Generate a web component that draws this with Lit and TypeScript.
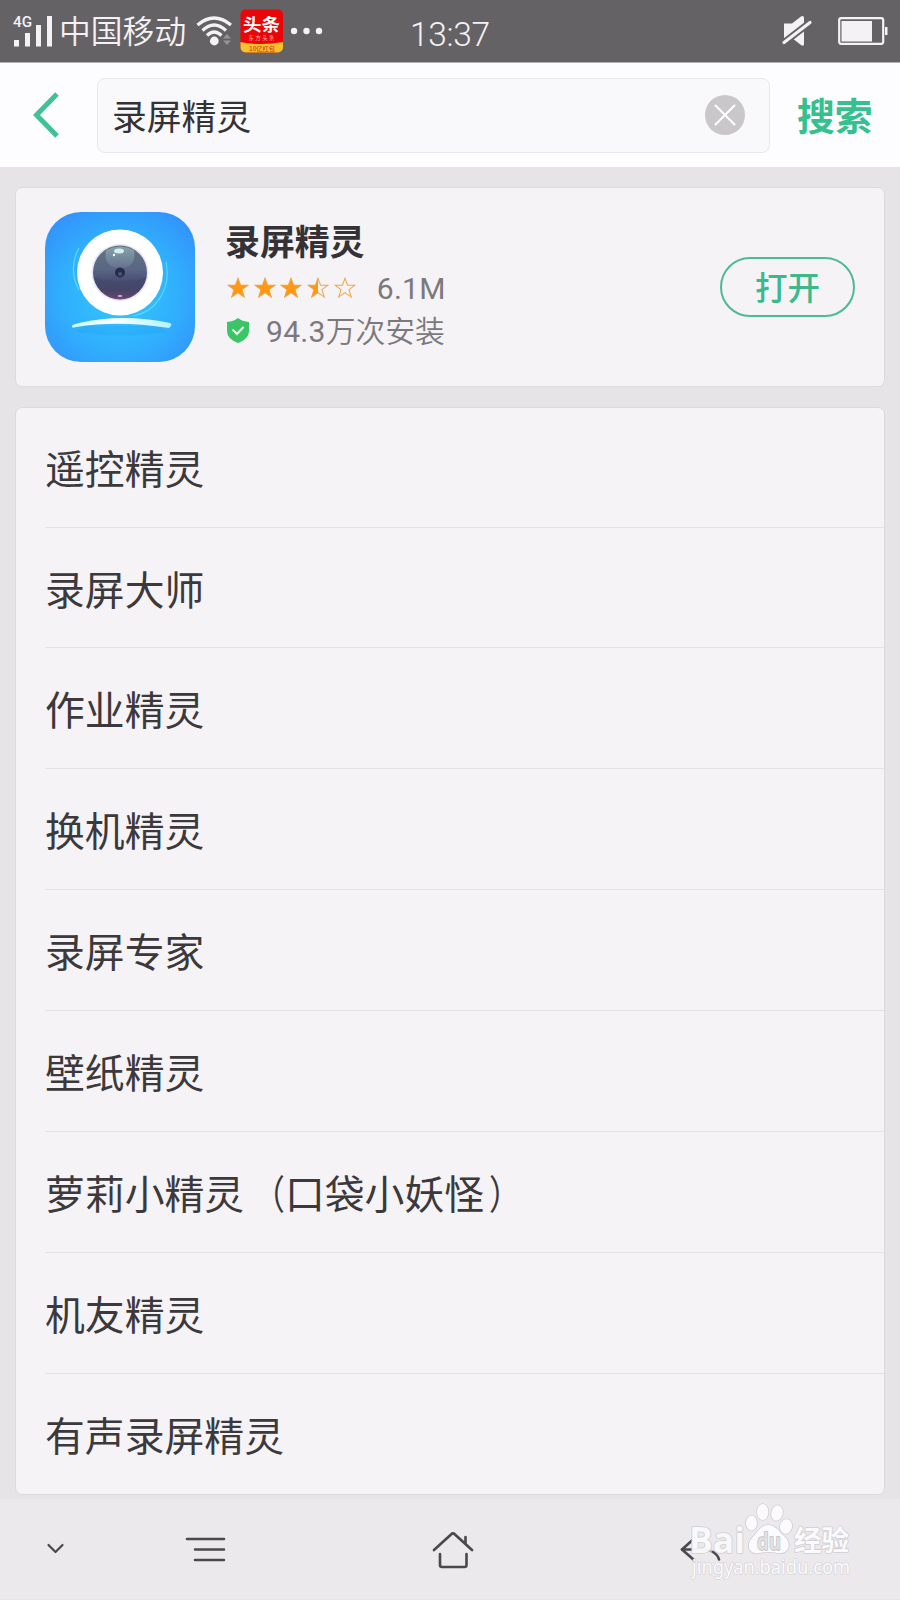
import { LitElement, html, css } from 'lit';
import { customElement } from 'lit/decorators.js';

const STAR = 'M11 0.8L13.7 8H21.6L15.2 12.7L17.6 20.6L11 15.9L4.4 20.6L6.8 12.7L0.4 8H8.3Z';

@customElement('status-bar')
class StatusBar extends LitElement {
  static styles = css`
    :host { display: flex; align-items: center; height: 63px; background: #656265; border-bottom: 1px solid #b4b2b4; box-sizing: border-box; color: #f4f2f4; padding: 0 13px; }
    svg { display: block; flex: none; }
    .carrier { font: 350 31.800px/44px "Noto Sans CJK SC", sans-serif; margin: -4px 0 0 7px; width: 127px; white-space: nowrap; }
    .wifi { margin-left: 10px; }
    .app { margin-left: 8px; }
    .dots { margin-left: 8px; }
    .time { font: 350 33.500px/40px Roboto, "Noto Sans CJK SC", sans-serif; letter-spacing: -.3px; margin-left: 87px; padding-top: 7px; }
    .right { margin-left: auto; display: flex; align-items: center; gap: 24px; margin-right: -11px; }
    .net { font: 500 14px Roboto, sans-serif; }
    .h1 { font: 700 17px "Noto Sans CJK SC", sans-serif; }
    .h2 { font: 400 5.500px "Noto Sans CJK SC", sans-serif; }
    .h3 { font: 700 6px "Noto Sans CJK SC", sans-serif; }
  `;
  render() {
    return html`
      <svg width="39" height="62" viewBox="13 0 39 62" fill="#f4f2f4">
        <text class="net" x="13" y="26.500" textLength="19" lengthAdjust="spacingAndGlyphs">4G</text>
        <rect x="14" y="40" width="5" height="6.500" /><rect x="25" y="33" width="5" height="13.500" />
        <rect x="36" y="25" width="5" height="21.500" /><rect x="47" y="16" width="5" height="30.500" />
      </svg>
      <span class="carrier">中国移动</span>
      <svg class="wifi" width="36" height="62" viewBox="196 0 36 62" fill="none" stroke="#f4f2f4" stroke-width="3.200">
        <path d="M197.500 25Q214 11 231 25M202.500 30.500Q214 19.500 226 30.500M207 35.500Q214 28.500 221.500 35.500" />
        <circle cx="214.300" cy="41" r="4.400" fill="#f4f2f4" stroke="none" />
        <path d="M223 38.500L227 34L231 38.500ZM223 40.500H231L227 45Z" fill="#969396" stroke="none" />
      </svg>
      <svg class="app" width="43" height="62" viewBox="241 0 43 62">
        <defs><clipPath id="c"><rect x="241.500" y="9.500" width="42.500" height="43" rx="5" /></clipPath></defs>
        <g clip-path="url(#c)">
          <rect x="241" y="9" width="43" height="44" fill="#ea0508" />
          <path d="M241 42Q262 46 284 42V53H241Z" fill="#f6c22c" />
        </g>
        <text class="h1" x="244" y="31" fill="#fff" textLength="37" lengthAdjust="spacingAndGlyphs">头条</text>
        <text class="h2" x="249.500" y="40" fill="#f3b3a0" textLength="26">东方头条</text>
        <text class="h3" x="250" y="51" fill="#dc5a18" textLength="26" lengthAdjust="spacingAndGlyphs">10亿红包</text>
      </svg>
      <svg class="dots" width="32" height="62" viewBox="292 0 32 62" fill="#f4f2f4">
        <circle cx="295" cy="31" r="3.200" /><circle cx="307.500" cy="31" r="3.200" /><circle cx="320" cy="31" r="3.200" />
      </svg>
      <span class="time">13:37</span>
      <div class="right">
        <svg width="32" height="62" viewBox="781 0 32 62" fill="#f4f2f4">
          <path d="M784 23.500H792L801 16.500Q804 15 804 18V44Q804 47 801 45L792 38H784Z" />
          <path d="M784 42.500L810 22.500" stroke="#656265" stroke-width="7" />
          <path d="M784 42.500L810 22.500" stroke="#f4f2f4" stroke-width="3.200" stroke-linecap="round" />
        </svg>
        <svg width="61" height="62" viewBox="837 0 61 62" fill="#f4f2f4">
          <rect x="839.200" y="18.200" width="44" height="25.600" rx="2" fill="none" stroke="#f4f2f4" stroke-width="2.200" />
          <rect x="841.500" y="21" width="30.500" height="20.500" /><path d="M885 27H887.500V35H885Z" />
        </svg>
      </div>`;
  }
}

@customElement('search-header')
class SearchHeader extends LitElement {
  static styles = css`
    :host { display: flex; align-items: center; height: 104px; background: #fdfcfe; box-sizing: border-box; padding: 0 0 0 33px; }
    svg { display: block; flex: none; }
    .field { margin-left: 37px; width: 673px; height: 75px; box-sizing: border-box; border: 1.500px solid #e9e7ea; border-radius: 8px; background: #f9f8fa; display: flex; align-items: center; justify-content: space-between; padding: 0 24px 0 14px; color: #343234; font: 400 34.800px/50px "Noto Sans CJK SC", sans-serif; }
    .go { margin-left: 27px; color: #35c08e; font: 700 37.800px/54px "Noto Sans CJK SC", sans-serif; padding-bottom: 3px; }
  `;
  render() {
    return html`
      <svg width="27" height="46" viewBox="0 0 27 46" fill="none" stroke="#3fc296" stroke-width="5"><path d="M24 2L3.500 23L24 44" /></svg>
      <div class="field"><span>录屏精灵</span>
        <svg width="40" height="40" viewBox="0 0 40 40"><circle cx="20" cy="20" r="20" fill="#cac7ca" /><path d="M10.500 10.500L29.500 29.500M29.500 10.500L10.500 29.500" stroke="#fff" stroke-width="2" stroke-linecap="round" /></svg>
      </div>
      <span class="go">搜索</span>`;
  }
}

@customElement('app-card')
class AppCard extends LitElement {
  static styles = css`
    :host { display: flex; align-items: center; height: 200px; box-sizing: border-box; margin: 20px 15px 0 15px; padding: 0 29px 0 29px; background: #f5f3f6; border: 1px solid #dcdadd; border-radius: 7px; }
    svg { display: block; flex: none; }
    .info { margin-left: 30px; flex: 1; height: 150px; }
    .name { color: #343234; font: 700 34.900px/50px "Noto Sans CJK SC", sans-serif; margin-top: 3px; }
    .line { display: flex; align-items: center; height: 43px; color: #7b797b; font: 400 30px/43px Roboto, "Noto Sans CJK SC", sans-serif; white-space: nowrap; }
    .line:nth-child(2) { margin-top: 1px; }
    .stars { display: flex; gap: 4.700px; margin: 0 21px 0 2px; }
    .size { letter-spacing: .3px; padding-top: 2px; }
    .num { letter-spacing: .3px; padding-top: 2px; }
    .shield { margin: 0 17px 0 2px; }
    .cn { font: 350 29.800px/43px "Noto Sans CJK SC", sans-serif; padding-bottom: 2px; }
    .open { width: 135px; height: 60px; box-sizing: border-box; border: 2px solid #4abb92; border-radius: 30px; background: transparent; color: #3bb98b; font: 500 32.500px/48px "Noto Sans CJK SC", sans-serif; padding: 0 0 2px; }
  `;
  star(fill: number, i: number) {
    return html`<svg width="22" height="22" viewBox="0 0 22 22">
      <defs><clipPath id="s${i}"><rect width="${22 * fill}" height="22" /></clipPath></defs>
      <path d=${STAR} fill="#ff9710" clip-path="url(#s${i})" />
      <path d=${STAR} transform="translate(.6 .6) scale(.945)" fill="none" stroke="#f3a445" stroke-width="1.100" />
    </svg>`;
  }
  render() {
    return html`
      <svg width="150" height="150" viewBox="0 0 150 150">
        <defs>
          <radialGradient id="bg" cx=".5" cy=".55" r=".75"><stop offset="0" stop-color="#35c8ff" /><stop offset=".5" stop-color="#30b0fd" /><stop offset="1" stop-color="#3488fb" /></radialGradient>
          <linearGradient id="lens" x2="0" y2="1"><stop offset="0" stop-color="#607783" /><stop offset=".45" stop-color="#596684" /><stop offset=".62" stop-color="#4a5275" /><stop offset=".82" stop-color="#4c4768" /><stop offset="1" stop-color="#704870" /></linearGradient>
          <linearGradient id="shine" x2="0" y2="1"><stop offset="0" stop-color="#9bb9c0" /><stop offset="1" stop-color="#6c7995" /></linearGradient>
          <linearGradient id="base"><stop offset="0" stop-color="#c8ffff" /><stop offset=".4" stop-color="#fff" /><stop offset="1" stop-color="#b2f2ff" /></linearGradient>
        </defs>
        <rect width="150" height="150" rx="36" fill="url(#bg)" />
        <path d="M34 36C27 48 26 64 34 78M121 50C126 74 114 99 88 104" fill="none" stroke="#55dcff" stroke-width="1.200" />
        <circle cx="75" cy="60.500" r="43" fill="#fff" />
        <circle cx="75" cy="60.500" r="28.500" fill="#e9e3f4" />
        <circle cx="75" cy="60.500" r="27" fill="url(#lens)" />
        <path d="M49 66Q75 72 101 66A27 27 0 0 1 49 66Z" fill="#3d4268" opacity=".35" />
        <path d="M61 38Q75 31 89 38Q92 56 75 56Q58 56 61 38Z" fill="url(#shine)" opacity=".65" />
        <circle cx="75" cy="60.500" r="5" fill="#272c4c" /><circle cx="75" cy="62" r="2" fill="#4c5473" />
        <ellipse cx="74" cy="39" rx="5" ry="2.500" fill="#d5eded" /><circle cx="69" cy="43" r="1.200" fill="#fff" />
        <ellipse cx="75" cy="84" rx="2.500" ry="1" fill="#e7a4d4" />
        <path d="M31 120Q76 127 121 120L115 114H40Z" fill="#1997ef" opacity=".2" />
        <path d="M27 115C26 113 30 112 34 111C66 104 94 105 125 111Q128 113 124 116C91 111 61 110 31 115Q28 116 27 115Z" fill="url(#base)" />
      </svg>
      <div class="info">
        <div class="name">录屏精灵</div>
        <div class="line"><span class="stars">${[1, 1, 1, 0.5, 0].map((n, i) => this.star(n, i))}</span><span class="size">6.1M</span></div>
        <div class="line">
          <svg class="shield" width="22" height="25" viewBox="0 0 22 25"><path d="M11 0Q15 3.500 22 4V13Q22 21 11 25Q0 21 0 13V4Q7 3.500 11 0Z" fill="#3cc566" /><path d="M5.500 11.500L10 16L16.500 9" fill="none" stroke="#eafff0" stroke-width="2" /></svg>
          <span class="num">94.3</span><span class="cn">万次安装</span>
        </div>
      </div>
      <button class="open">打开</button>`;
  }
}

@customElement('suggest-list')
class SuggestList extends LitElement {
  static styles = css`
    :host { display: block; height: 1088px; box-sizing: border-box; margin: 20px 15px 0 15px; padding-left: 29px; background: #f5f3f6; border: 1px solid #dcdadd; border-radius: 7px; }
    .row { height: 120.900px; box-sizing: border-box; border-bottom: 1px solid #e2e0e3; display: flex; align-items: center; color: #3b393b; font: 400 39.850px/60px "Noto Sans CJK SC", sans-serif; }
    .row:first-child { height: 119.600px; }
    .row:last-child { border-bottom: 0; height: 120px; }
    .open, .shut { display: inline-block; transform: scaleX(.8); }
    .open { transform-origin: right; margin-left: 1px; }
    .shut { transform-origin: left; margin-left: 5px; }
  `;
  render() {
    return ['遥控精灵', '录屏大师', '作业精灵', '换机精灵', '录屏专家', '壁纸精灵', '萝莉小精灵（口袋小妖怪）', '机友精灵', '有声录屏精灵']
      .map((t) => {
        const [head, inner] = t.split(/[（）]/);
        return html`<div class="row"><span>${head}${inner ? html`<span class="open">（</span>${inner}<span class="shut">）</span>` : ''}</span></div>`;
      });
  }
}

@customElement('nav-bar')
class NavBar extends LitElement {
  static styles = css`
    :host { display: flex; align-items: flex-start; height: 100px; margin-top: 4px; background: #ebe9ec; position: relative; }
    svg { display: block; flex: none; fill: none; stroke: #4b484b; stroke-width: 2.600px; stroke-linecap: round; stroke-linejoin: round; }
    .down { margin: 43px 0 0 46px; stroke-width: 2.200px; }
    .menu { margin: 36px 0 0 120px; }
    .home { margin: 32px 0 0 205px; }
    .back { margin: 37px 0 0 206px; }
    .mark { position: absolute; left: 680px; top: 1px; stroke: #d0ced1; stroke-width: 1.600px; fill: #fbfafc; paint-order: stroke; }
    .bai { font: 700 36px "Open Sans", "Noto Sans", sans-serif; }
    .jy { font: 700 28px "Noto Sans CJK SC", sans-serif; }
    .url { font: 400 20px "Noto Sans", sans-serif; stroke-width: 1.200px; }
    .du { font: 700 23px "Open Sans", "Noto Sans", sans-serif; fill: #e2e0e3; stroke: #bebcbf; stroke-width: 1.400px; }
  `;
  render() {
    return html`
      <svg class="down" width="19" height="14" viewBox="0 0 19 14"><path d="M2.500 3L9.500 10L16.500 3" /></svg>
      <svg class="menu" width="42" height="28" viewBox="0 0 42 28"><path d="M2 4H39M10 14.500H39M10 25H39" /></svg>
      <svg class="home" width="42" height="40" viewBox="432 1530 42 40"><path d="M434 1549L451 1533.500Q453 1531.500 455 1533.500L472 1549M465.500 1542.500V1536M440 1553V1564Q440 1566 442 1566H464.500Q466.500 1566 466.500 1564V1553" /></svg>
      <svg class="back" width="42" height="28" viewBox="680 1536 42 28"><path d="M692 1540.500L682 1549.500L694 1560" /><path d="M682 1549.500H693" /><path d="M695 1549.500Q707 1549 713 1552" stroke="#b5b2b5" /><path d="M713 1552Q718 1555 719 1559.500" /></svg>
      <svg class="mark" width="190" height="90" viewBox="680 1500 190 90">
        <text class="bai" x="689" y="1552.500" textLength="56" lengthAdjust="spacingAndGlyphs" fill-opacity=".92">Bai</text>
        <ellipse cx="751.500" cy="1523" rx="5.500" ry="7.500" /><ellipse cx="762.700" cy="1512" rx="5.700" ry="8" />
        <ellipse cx="777" cy="1513" rx="5.700" ry="7.700" transform="rotate(12 777 1513)" /><ellipse cx="786" cy="1526.500" rx="6" ry="7.300" transform="rotate(12 786 1526.500)" />
        <path d="M768 1525C776 1525 780 1533 785 1537C793 1545 787 1555 778 1553Q769 1551 760 1553C750 1555 745 1546 752 1538C757 1534 760 1525 768 1525Z" />
        <text class="du" x="757" y="1550" textLength="24" lengthAdjust="spacingAndGlyphs">du</text>
        <text class="jy" x="794" y="1551" textLength="55" lengthAdjust="spacingAndGlyphs">经验</text>
        <text class="url" x="692" y="1574" textLength="158" lengthAdjust="spacingAndGlyphs">jingyan.baidu.com</text>
      </svg>`;
  }
}

@customElement('app-root')
class AppRoot extends LitElement {
  static styles = css`
    :host { display: flex; flex-direction: column; width: 900px; height: 1600px; overflow: hidden; background: #e6e4e7; }
    status-bar, search-header, app-card, suggest-list, nav-bar { flex: none; }
  `;
  render() {
    return html`<status-bar></status-bar><search-header></search-header><app-card></app-card><suggest-list></suggest-list><nav-bar></nav-bar>`;
  }
}
